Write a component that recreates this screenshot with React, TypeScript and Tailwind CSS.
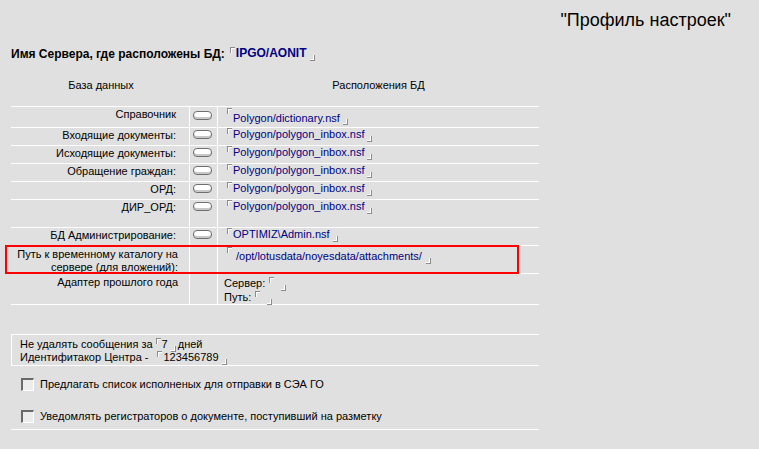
import type { ReactNode } from 'react';

const rows = [
    { label: 'Справочник', path: 'Polygon/dictionary.nsf', h: 'h-[21px]', first: true },
    { label: 'Входящие документы:', path: 'Polygon/polygon_inbox.nsf', h: 'h-[18px]' },
    { label: 'Исходящие документы:', path: 'Polygon/polygon_inbox.nsf', h: 'h-[18px]' },
    { label: 'Обращение граждан:', path: 'Polygon/polygon_inbox.nsf', h: 'h-[18px]' },
    { label: 'ОРД:', path: 'Polygon/polygon_inbox.nsf', h: 'h-[18px]' },
    { label: 'ДИР_ОРД:', path: 'Polygon/polygon_inbox.nsf', h: 'h-[28px]' },
    { label: 'БД Администрирование:', path: 'OPTIMIZ\\Admin.nsf', h: 'h-[18px]' },
];

// Notes-style field brackets
function Open() {
    return <span className="block shrink-0 w-[5px] h-[6px] border-l border-t border-[#8c8c8c] shadow-[inset_1px_1px_0_#ffffff]" />;
}

function Close({ top }: { top: string }) {
    return <span className={`block shrink-0 w-[5px] h-[6px] border-r border-b border-[#8c8c8c] shadow-[inset_-1px_-1px_0_#ffffff] ${top}`} />;
}

function Field({ children, drop = false, blue = true, bold = false }: { children?: ReactNode; drop?: boolean; blue?: boolean; bold?: boolean }) {
    return (
        <span className="flex items-start">
            <Open />
            <span className={`block ${drop ? 'mt-[4px]' : ''} ${children ? 'ml-[1px]' : 'w-[4px]'} ${blue ? 'text-[#000080]' : ''} ${bold ? 'font-bold' : ''} leading-[13px]`}>
                {children}
            </span>
            <span className="ml-[3px]">
                <Close top={drop ? 'mt-[11px]' : 'mt-[8px]'} />
            </span>
        </span>
    );
}

function Pill() {
    return <span className="block w-[19px] h-[9px] rounded-[4px] border border-[#6f6f6f] bg-white shadow-[inset_0_-2px_0_#c8c8c8]" />;
}

function Check({ children }: { children: ReactNode }) {
    return (
        <div className="flex items-center gap-[6px] pl-[10px] h-[13px]">
            <span className="block w-[13px] h-[13px] border-t-2 border-l-2 border-t-[#6a6a6a] border-l-[#6a6a6a] border-b border-r border-b-white border-r-white bg-[#ececec]" />
            <span className="leading-[13px]">{children}</span>
        </div>
    );
}

export default function App() {
    return (
        <div className="min-h-screen bg-[#e0e0e0] text-black text-[11px] font-['Liberation_Sans',Arial,sans-serif] pt-[10px]">
            <div className="text-right pr-[28px] text-[18px] leading-[21px]">"Профиль настроек"</div>

            <div className="mt-[16px] pl-[11px] flex items-start font-bold text-[12px] leading-[14px] h-[14px]">
                <span className="mr-[5px]">Имя Сервера, где расположены БД:</span>
                <Field bold>IPGO/AONIT</Field>
            </div>

            <div className="ml-[11px] w-[528px]">
                <div className="grid grid-cols-[179px_28px_321px] h-[45px] pt-[18px] leading-[13px]">
                    <div className="text-center pl-[1px]">База данных</div>
                    <div />
                    <div className="text-center">Расположения БД</div>
                </div>

                {rows.map((r, i) => (
                    <div key={i} className={`grid grid-cols-[179px_28px_321px] border-t border-white ${r.h}`}>
                        <div className="border-r border-white text-right pr-[13px] leading-[13px] pt-[1px]">{r.label}</div>
                        <div className={`border-r border-white pl-[3px] ${r.first ? 'pt-[4px]' : 'pt-[2px]'}`}>
                            <Pill />
                        </div>
                        <div className={`pl-[9px] ${r.first ? 'pt-[1px]' : 'pt-[0px]'}`}>
                            <Field drop={r.first}>{r.path}</Field>
                        </div>
                    </div>
                ))}

                <div className="relative grid grid-cols-[179px_28px_321px] border-t border-white h-[28px]">
                    <div className="border-r border-white text-right pr-[11px] pt-[2px] leading-[13px]">
                        Путь к временному каталогу на
                        <br />
                        сервере (для вложений):
                    </div>
                    <div className="border-r border-white" />
                    <div className="pl-[9px] pt-[1px] flex items-start">
                        <Open />
                        <span className="ml-[4px] mt-[3px] text-[#000080] leading-[13px]">/opt/lotusdata/noyesdata/attachments/</span>
                        <span className="ml-[4px]">
                            <Close top="mt-[11px]" />
                        </span>
                    </div>
                    <div className="absolute left-[-6px] top-[-1px] w-[514px] h-[29px] border-2 border-[#ff0000]" />
                </div>

                <div className="grid grid-cols-[179px_28px_321px] border-t border-b border-white h-[32px]">
                    <div className="border-r border-white text-right pr-[11px] pt-[2px] leading-[13px]">Адаптер прошлого года</div>
                    <div className="border-r border-white" />
                    <div className="pl-[6px] pt-[3px] leading-[13px]">
                        <div className="flex items-start">
                            <span className="mr-[4px]">Сервер:</span>
                            <Field />
                        </div>
                        <div className="flex items-start">
                            <span className="mr-[4px]">Путь:</span>
                            <Field />
                        </div>
                    </div>
                </div>

                <div className="mt-[29px] border-t border-l border-b border-white h-[32px] pl-[8px] pt-[3px] leading-[13px]">
                    <div className="flex items-start h-[13px]">
                        <span className="mr-[3px]">Не удалять сообщения за</span>
                        <Field blue={false}>7</Field>
                        <span className="ml-[2px]">дней</span>
                    </div>
                    <div className="flex items-start h-[13px]">
                        <span className="mr-[9px]">Идентифитакор Центра -</span>
                        <Field blue={false}>123456789</Field>
                    </div>
                </div>

                <div className="mt-[12px]">
                    <Check>Предлагать список исполненых для отправки в СЭА ГО</Check>
                </div>
                <div className="mt-[19px]">
                    <Check>Уведомлять регистраторов о документе, поступивший на разметку</Check>
                </div>
                <div className="mt-[6px] border-b border-white" />
            </div>
        </div>
    );
}
